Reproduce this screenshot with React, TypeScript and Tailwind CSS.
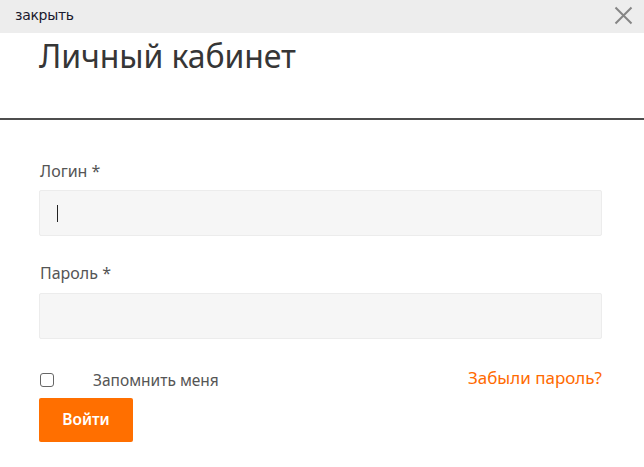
export default function App() {
  return (
    <div className="w-[644px] h-[467px] bg-white overflow-hidden font-['Noto_Sans',sans-serif]">
      {/* Top bar */}
      <div className="h-[33px] bg-[#ededed] flex items-center justify-between pl-[15px] pr-[10px]">
        <span className="text-[14px] text-[#1a1a2e] font-['DejaVu_Sans',sans-serif] tracking-[-0.3px] leading-none -mt-[3px]">
          закрыть
        </span>
        <svg width="19" height="19" viewBox="0 0 19 19" className="-mt-[2px] mr-[1px]">
          <path d="M1.5 1.5 L17.5 17.5 M17.5 1.5 L1.5 17.5" stroke="#858585" strokeWidth="2" />
        </svg>
      </div>

      {/* Header */}
      <div className="h-[87px] border-b-2 border-[#4d4d4d] px-[39px] pt-[3px]">
        <h1 className="text-[32px] text-[#363636] leading-[40px] tracking-[-0.1px]">Личный кабинет</h1>
      </div>

      {/* Form */}
      <form className="px-[39px] pt-[41px] flex flex-col">
        <label className="text-[16px] text-[#555] leading-[20px] mb-[9px] pl-[1px]">Логин *</label>
        <div className="h-[46px] w-[563px] bg-[#f6f6f6] border border-[#ececec] rounded-[2px] flex items-center pl-[17px]">
          <span className="w-[1px] h-[17px] bg-[#222]" />
        </div>

        <label className="text-[16px] text-[#555] leading-[20px] mt-[27px] mb-[10px] pl-[1px]">Пароль *</label>
        <div className="h-[46px] w-[563px] bg-[#f6f6f6] border border-[#ececec] rounded-[2px]" />

        <div className="w-[563px] flex items-center justify-between mt-[31px]">
          <div className="flex items-center">
            <span className="ml-[1px] w-[14px] h-[14px] border border-[#666] rounded-[3px] bg-white" />
            <span className="ml-[39px] text-[15.5px] text-[#555] leading-[20px]">Запомнить меня</span>
          </div>
          <a className="text-[17px] text-[#ff6a00] leading-[20px] -mt-[5px]">Забыли пароль?</a>
        </div>

        <button
          type="button"
          className="mt-[8px] w-[94px] h-[44px] bg-[#ff6f00] text-white text-[15.5px] font-semibold rounded-[2px]"
        >
          Войти
        </button>
      </form>
    </div>
  );
}
